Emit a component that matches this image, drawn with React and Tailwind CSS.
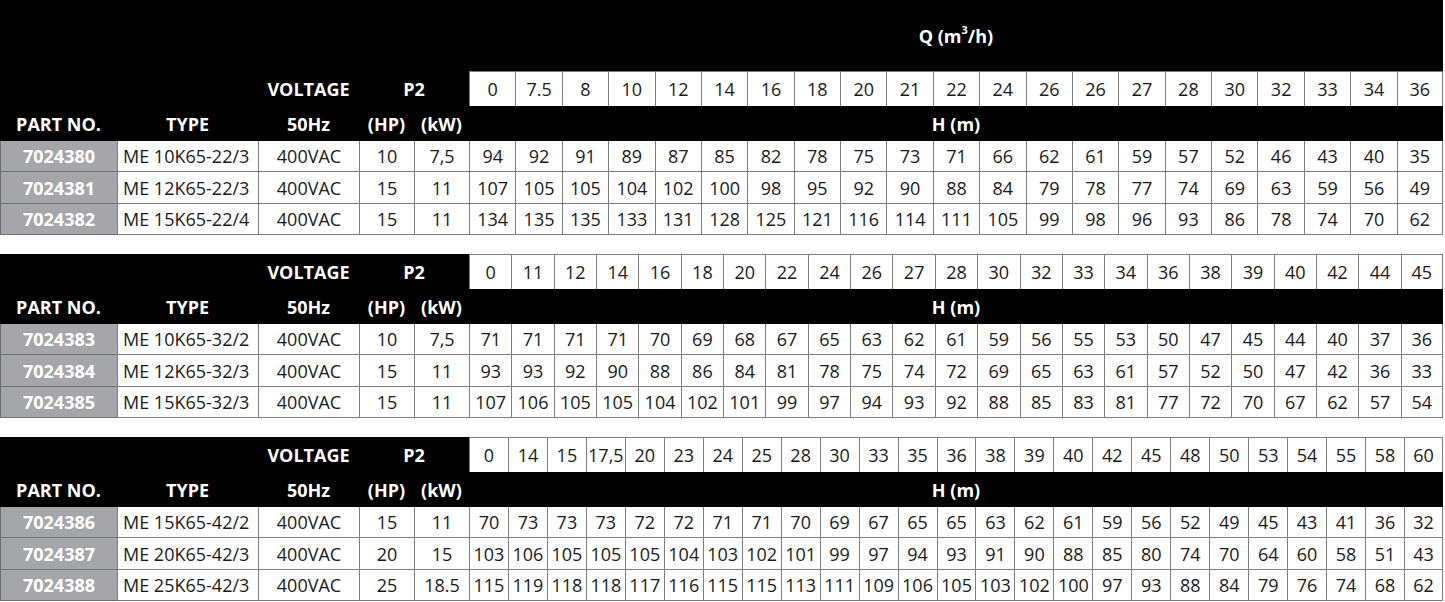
import React from "react";

const tables = [
  {
    grid: "grid-cols-[117px_141px_101px_55px_55px_repeat(21,minmax(0,1fr))]",
    title: true,
    q: ["0", "7.5", "8", "10", "12", "14", "16", "18", "20", "21", "22", "24", "26", "26", "27", "28", "30", "32", "33", "34", "36"],
    rows: [
      ["7024380", "ME 10K65-22/3", "400VAC", "10", "7,5", "94 92 91 89 87 85 82 78 75 73 71 66 62 61 59 57 52 46 43 40 35"],
      ["7024381", "ME 12K65-22/3", "400VAC", "15", "11", "107 105 105 104 102 100 98 95 92 90 88 84 79 78 77 74 69 63 59 56 49"],
      ["7024382", "ME 15K65-22/4", "400VAC", "15", "11", "134 135 135 133 131 128 125 121 116 114 111 105 99 98 96 93 86 78 74 70 62"],
    ],
  },
  {
    grid: "grid-cols-[117px_141px_101px_55px_55px_repeat(23,minmax(0,1fr))]",
    q: ["0", "11", "12", "14", "16", "18", "20", "22", "24", "26", "27", "28", "30", "32", "33", "34", "36", "38", "39", "40", "42", "44", "45"],
    rows: [
      ["7024383", "ME 10K65-32/2", "400VAC", "10", "7,5", "71 71 71 71 70 69 68 67 65 63 62 61 59 56 55 53 50 47 45 44 40 37 36"],
      ["7024384", "ME 12K65-32/3", "400VAC", "15", "11", "93 93 92 90 88 86 84 81 78 75 74 72 69 65 63 61 57 52 50 47 42 36 33"],
      ["7024385", "ME 15K65-32/3", "400VAC", "15", "11", "107 106 105 105 104 102 101 99 97 94 93 92 88 85 83 81 77 72 70 67 62 57 54"],
    ],
  },
  {
    grid: "grid-cols-[117px_141px_101px_55px_55px_repeat(25,minmax(0,1fr))]",
    q: ["0", "14", "15", "17,5", "20", "23", "24", "25", "28", "30", "33", "35", "36", "38", "39", "40", "42", "45", "48", "50", "53", "54", "55", "58", "60"],
    rows: [
      ["7024386", "ME 15K65-42/2", "400VAC", "15", "11", "70 73 73 73 72 72 71 71 70 69 67 65 65 63 62 61 59 56 52 49 45 43 41 36 32"],
      ["7024387", "ME 20K65-42/3", "400VAC", "20", "15", "103 106 105 105 105 104 103 102 101 99 97 94 93 91 90 88 85 80 74 70 64 60 58 51 43"],
      ["7024388", "ME 25K65-42/3", "400VAC", "25", "18.5", "115 119 118 118 117 116 115 115 113 111 109 106 105 103 102 100 97 93 88 84 79 76 74 68 62"],
    ],
  },
];

const rowHeights = ["h-[31px]", "h-[32px]", "h-[31px]"];

const cell = "flex items-center justify-center border-l border-b border-[#7d7d7d] bg-white";

function PumpTable({ table }) {
  const { grid, title, q, rows } = table;
  return (
    <div className="w-[1443px]">
      {title && (
        <div className={`grid h-[71px] bg-black ${grid}`}>
          <div className="col-[6/-1] flex items-center justify-center text-[18px] font-bold text-white">
            Q (m<sup className="text-[11px]">3</sup>/h)
          </div>
        </div>
      )}

      <div className={`grid h-[35px] bg-black ${grid}`}>
        <div className="col-span-2" />
        <div className="flex items-center justify-center text-[18px] font-bold text-white">VOLTAGE</div>
        <div className="col-span-2 flex items-center justify-center text-[18px] font-bold text-white">P2</div>
        {q.map((v, i) => (
          <div
            key={i}
            className={`flex items-center justify-center border-l border-t border-[#7d7d7d] bg-white text-[18px] text-[#1a1a1a] ${
              i === q.length - 1 ? "border-r" : ""
            }`}
          >
            {v}
          </div>
        ))}
      </div>

      <div className={`grid h-[35px] bg-black text-[18px] font-bold text-white ${grid}`}>
        <div className="flex items-center justify-center">PART NO.</div>
        <div className="flex items-center justify-center">TYPE</div>
        <div className="flex items-center justify-center">50Hz</div>
        <div className="flex items-center justify-center">(HP)</div>
        <div className="flex items-center justify-center">(kW)</div>
        <div className="col-[6/-1] flex items-center justify-center">H (m)</div>
      </div>

      {rows.map((r, ri) => {
        const vals = r[5].split(" ");
        return (
          <div key={r[0]} className={`grid text-[18px] text-[#1a1a1a] ${grid} ${rowHeights[ri]}`}>
            <div className="flex items-center justify-center border-b border-l border-[#6f6f6f] bg-[#a5a6a9] text-[18px] font-bold text-white">
              {r[0]}
            </div>
            <div className={`${cell} justify-start pl-[5px]`}>{r[1]}</div>
            <div className={cell}>{r[2]}</div>
            <div className={cell}>{r[3]}</div>
            <div className={cell}>{r[4]}</div>
            {vals.map((v, i) => (
              <div key={i} className={`${cell} ${i === vals.length - 1 ? "border-r" : ""}`}>
                {v}
              </div>
            ))}
          </div>
        );
      })}
    </div>
  );
}

export default function App() {
  return (
    <div className="flex w-[1445px] flex-col gap-[19px] bg-white font-['Open_Sans','Noto_Sans',sans-serif] leading-none">
      {tables.map((t, i) => (
        <PumpTable key={i} table={t} />
      ))}
    </div>
  );
}
